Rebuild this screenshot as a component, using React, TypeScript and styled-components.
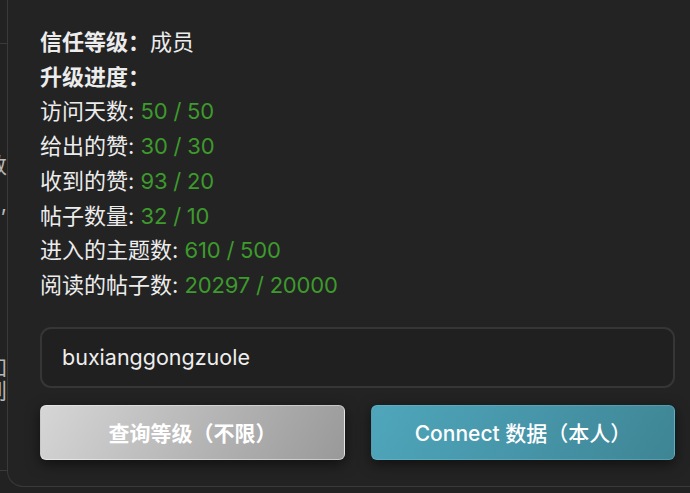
import React from "react";
import styled, { createGlobalStyle } from "styled-components";

const Global = createGlobalStyle`
  html, body {
    margin: 0;
    padding: 0;
    background: #222222;
    overflow: hidden;
  }
  body {
    font-family: Inter, "Noto Sans CJK SC", sans-serif;
    color: #ececec;
  }
`;

const Page = styled.div`
  display: flex;
  width: 690px;
  height: 493px;
  overflow: hidden;
  background: #222222;
`;

const BackStrip = styled.div`
  width: 7px;
  flex: none;
  display: flex;
  flex-direction: column;
  overflow: hidden;
  color: #b8b8b8;
  font-size: 22px;
`;

const BackDivider = styled.div<{ $top: number }>`
  margin-top: ${(p) => p.$top}px;
  height: 1px;
  background: #3a3a3a;
  flex: none;
`;

const BackText = styled.div<{ $top: number }>`
  margin-top: ${(p) => p.$top}px;
  display: flex;
  justify-content: flex-end;
  white-space: nowrap;
  line-height: 24px;
  height: 24px;
  flex: none;
`;

const Panel = styled.div`
  flex: none;
  width: 720px;
  height: 487px;
  box-sizing: border-box;
  background: #232323;
  border-left: 1px solid #3a3a3a;
  border-bottom: 1px solid #3a3a3a;
  border-bottom-left-radius: 16px;
  padding: 25px 0 0 32px;
  display: flex;
  flex-direction: column;
`;

const Content = styled.div`
  width: 635px;
  display: flex;
  flex-direction: column;
`;

const Info = styled.div`
  display: flex;
  flex-direction: column;
  font-size: 22px;
  line-height: 34.7px;
`;

const Row = styled.div`
  white-space: nowrap;
`;

const Strong = styled.span`
  font-weight: 700;
`;

const Value = styled.span`
  color: #3d9a2c;
  letter-spacing: -0.2px;
`;

const Input = styled.input`
  margin-top: 24px;
  height: 61px;
  box-sizing: border-box;
  width: 100%;
  border: 2px solid #363636;
  border-radius: 11px;
  background: #202020;
  color: #eeeeee;
  font-family: Inter, "Noto Sans CJK SC", sans-serif;
  font-size: 21.5px;
  padding: 0 20px;
  outline: none;
`;

const Buttons = styled.div`
  margin-top: 17px;
  display: grid;
  grid-template-columns: 305px 304px;
  column-gap: 26px;
`;

const Button = styled.button<{ $variant: "grey" | "teal" }>`
  height: 55px;
  border-radius: 6px;
  font-family: Inter, "Noto Sans CJK SC", sans-serif;
  font-size: 21px;
  color: #ffffff;
  font-weight: ${(p) => (p.$variant === "grey" ? 700 : 500)};
  border: 1px solid
    ${(p) => (p.$variant === "grey" ? "rgba(255,255,255,0.45)" : "rgba(120,200,220,0.35)")};
  background: ${(p) =>
    p.$variant === "grey"
      ? "linear-gradient(120deg, #d6d6d6 0%, #b4b4b4 55%, #999999 100%)"
      : "linear-gradient(120deg, #4fa6bb 0%, #4694a7 55%, #3e8594 100%)"};
  box-shadow: 0 4px 14px rgba(0, 0, 0, 0.55);
  cursor: pointer;
  padding: 0;
`;

const rows: [string, string][] = [
  ["访问天数", "50 / 50"],
  ["给出的赞", "30 / 30"],
  ["收到的赞", "93 / 20"],
  ["帖子数量", "32 / 10"],
  ["进入的主题数", "610 / 500"],
  ["阅读的帖子数", "20297 / 20000"],
];

export default function App() {
  return (
    <>
      <Global />
      <Page>
        <BackStrip>
          <BackDivider $top={43} />
          <BackText $top={109}>数</BackText>
          <BackText $top={14}>,</BackText>
          <BackText $top={140}>加</BackText>
          <BackText $top={0}>到</BackText>
          <BackDivider $top={67} />
        </BackStrip>
        <Panel>
          <Content>
            <Info>
              <Row>
                <Strong>信任等级：</Strong>成员
              </Row>
              <Row>
                <Strong>升级进度：</Strong>
              </Row>
              {rows.map(([label, value]) => (
                <Row key={label}>
                  {label}: <Value>{value}</Value>
                </Row>
              ))}
            </Info>
            <Input defaultValue="buxianggongzuole" />
            <Buttons>
              <Button $variant="grey">查询等级（不限）</Button>
              <Button $variant="teal">Connect 数据（本人）</Button>
            </Buttons>
          </Content>
        </Panel>
      </Page>
    </>
  );
}
